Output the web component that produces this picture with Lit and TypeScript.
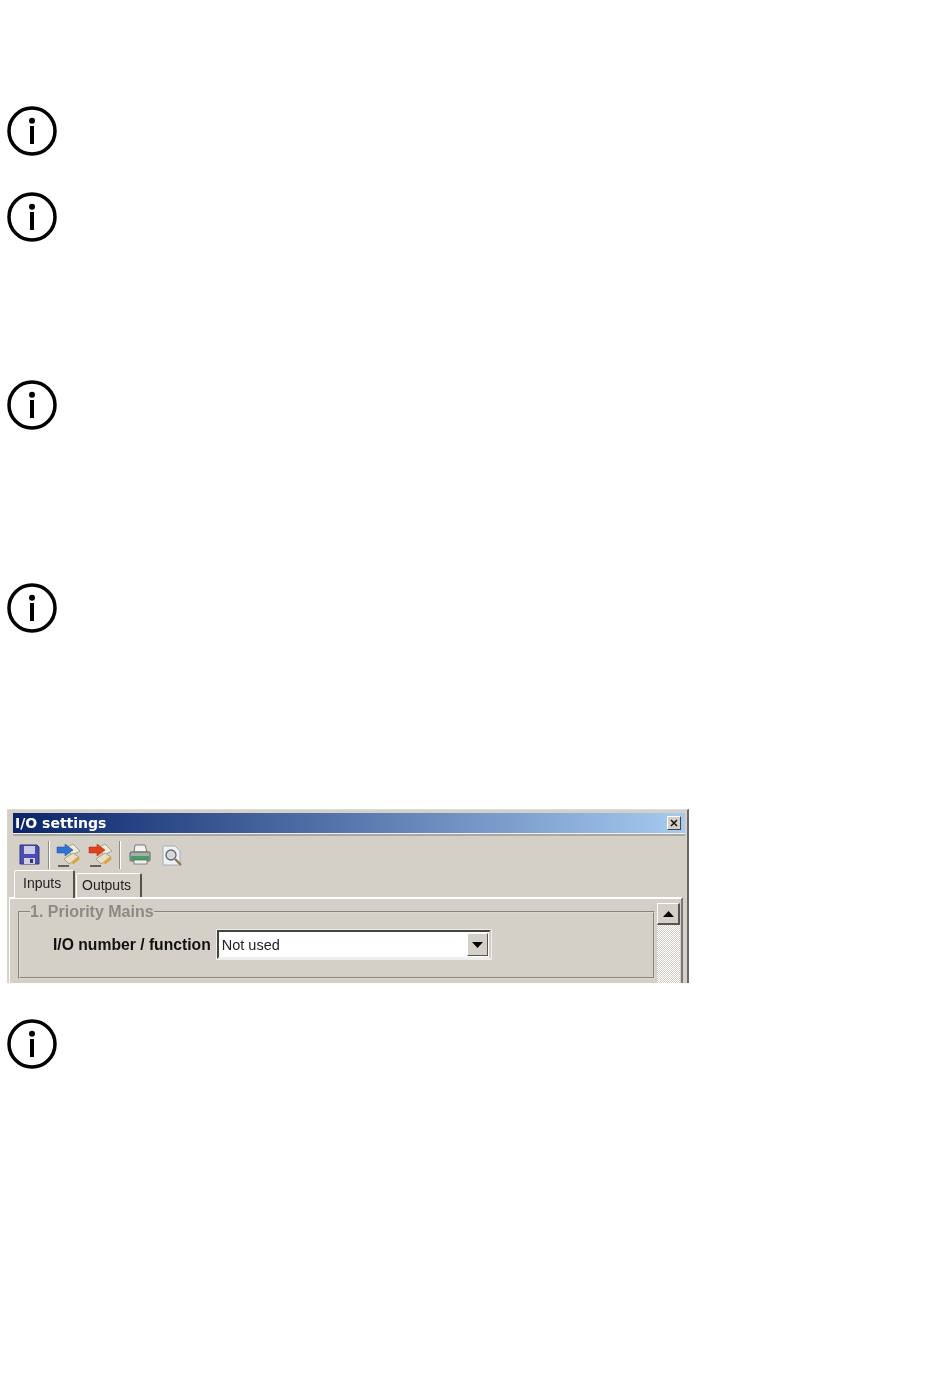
import { LitElement, html, css, svg } from 'lit'
import { customElement } from 'lit/decorators.js'

const infoIcon = html`<svg class="info" width="50" height="50" viewBox="0 0 50 50">
    <circle cx="25" cy="25" r="23" fill="none" stroke="#000" stroke-width="3.500" />
    <circle cx="25" cy="14.800" r="3" fill="#000" />
    <rect x="23" y="20" width="4" height="18" fill="#000" />
</svg>`

const saveIcon = svg`
    <path d="M1 1h17l2 2v17H1z" fill="#4a4cae" stroke="#34367f" />
    <rect x="5" y="2" width="11" height="8" fill="#c9cbe8" />
    <rect x="5" y="14" width="11" height="6" fill="#d0d0e0" />
    <rect x="11" y="15" width="3" height="4" fill="#34367f" />
`

const transferIcon = (arrow: string, dark: string) => svg`
    <path d="M9 5l8-4 7 7-8 4z" fill="#efe9d8" stroke="#9a9482" stroke-width=".8" />
    <path d="M8 16l9-6 6 4-10 7z" fill="#e8dfc2" stroke="#9a9482" stroke-width=".8" />
    <path d="M15 20l6-6 3 2-6 5z" fill="#d9a640" />
    <path d="M1 4h8V1l8 6-8 6v-3H1z" fill="${arrow}" stroke="${dark}" stroke-width=".5" />
    <path d="M2 23h11" stroke="#333" stroke-width="1.400" />
`

const printerIcon = svg`
    <path d="M6 1h10l2 7H5z" fill="#f4f4f4" stroke="#777" />
    <rect x="1" y="8" width="20" height="9" rx="1" fill="#a9adad" stroke="#5d6464" />
    <rect x="2" y="12" width="18" height="4" fill="#45a060" />
    <rect x="5" y="16" width="13" height="4" fill="#ecf0ec" stroke="#5d6464" stroke-width=".7" />
`

const previewIcon = svg`
    <path d="M2 2h12l5 5v14H2z" fill="#eef1f6" stroke="#a6acb8" />
    <circle cx="10" cy="11" r="5" fill="#d5d9de" stroke="#666" stroke-width="1.300" />
    <path d="M14 15l6 6" stroke="#8a7a50" stroke-width="2.400" />
`

@customElement('app-root')
export class AppRoot extends LitElement {
    static get styles() {
        return css`
            :host {
                display: flex;
                flex-direction: column;
                align-items: flex-start;
                min-height: 1387px;
                background: #fff;
                padding: 106px 0 0 7px;
                box-sizing: border-box;
                font-family: 'Liberation Sans', Arial, sans-serif;
            }

            .info {
                display: block;
                filter: blur(0.3px);
            }

            .gap-36 {
                margin-top: 36px;
            }

            .gap-138 {
                margin-top: 138px;
            }

            .gap-153 {
                margin-top: 153px;
            }

            .window {
                box-sizing: border-box;
                width: 682px;
                height: 174px;
                margin-top: 176px;
                padding: 3px 2px 0 5px;
                background: #d4d0c8;
                border-top: 1px solid #dcdcdc;
                border-left: 1px solid #d8d4cc;
                border-right: 2px solid #6a6760;
                overflow: hidden;
                display: flex;
                flex-direction: column;
                filter: blur(0.4px);
            }

            .title {
                flex: none;
                height: 20px;
                display: flex;
                align-items: center;
                justify-content: space-between;
                padding: 0 4px 0 2px;
                background: linear-gradient(90deg, #0a246a, #a6caf0);
                color: #fff;
                font: bold 14px/20px 'DejaVu Sans', sans-serif;
                border-bottom: 1px solid #f0efe8;
                box-shadow: 0 2px 0 #a9aa9f;
            }

            .close {
                box-sizing: border-box;
                width: 14px;
                height: 14px;
                display: flex;
                align-items: center;
                justify-content: center;
                background: #d4d0c8;
                border: 1px solid;
                border-color: #fff #444 #444 #fff;
            }

            .toolbar {
                flex: none;
                height: 35px;
                display: flex;
                align-items: center;
                padding-top: 6px;
                box-sizing: border-box;
            }

            .toolbar svg {
                display: block;
            }

            .save {
                margin-left: 6px;
            }

            .sep {
                width: 1px;
                height: 28px;
                background: #8e8b84;
                border-right: 1px solid #fff;
            }

            .sep.first {
                margin: 0 6px 0 8px;
            }

            .sep.second {
                margin: 0 8px 0 7px;
            }

            .arrow-out {
                margin-left: 8px;
            }

            .print-preview {
                margin-left: 10px;
            }

            .tabs {
                flex: none;
                display: flex;
                align-items: flex-end;
                height: 28px;
                margin-left: -5px;
                padding-left: 6px;
                position: relative;
                z-index: 1;
            }

            .tab {
                box-sizing: border-box;
                font-size: 14px;
                color: #222;
                background: #d4d0c8;
                border: 1px solid;
                border-color: #fff #55524c transparent #fff;
                border-width: 1px 2px 0 1px;
                border-radius: 2px 2px 0 0;
            }

            .tab.active {
                width: 61px;
                height: 28px;
                padding: 4px 0 0 8px;
                margin-bottom: -1px;
            }

            .tab.other {
                width: 66px;
                height: 24px;
                margin-left: 1px;
                padding: 3px 0 0 5px;
            }

            .page {
                flex: 1;
                min-height: 0;
                display: flex;
                gap: 2px;
                margin: 0 2px 0 -4px;
                padding: 4px 3px 0 8px;
                border-top: 2px solid #fff;
                border-left: 1px solid #fff;
                border-right: 2px solid #777;
            }

            fieldset {
                box-sizing: border-box;
                flex: none;
                width: 637px;
                height: 76px;
                margin: 0;
                padding: 0 0 0 33px;
                min-width: 0;
                border: 2px groove #dcd8d0;
            }

            legend {
                margin-left: -23px;
                padding: 0;
                font-size: 16px;
                line-height: 18px;
                font-weight: bold;
                color: #8c8a86;
            }

            .row {
                display: flex;
                align-items: center;
                gap: 6px;
                margin-top: 9px;
            }

            label {
                font-size: 15.700px;
                font-weight: bold;
                color: #111;
            }

            .select {
                box-sizing: border-box;
                width: 274px;
                height: 29px;
                display: flex;
                align-items: center;
                justify-content: space-between;
                padding: 0 1px 0 3px;
                background: #fff;
                border: 2px solid;
                border-color: #444 #d4d0c8 #eeeeee #444;
                outline: 1px solid #efefea;
                font-size: 14.500px;
                color: #222;
            }

            .drop {
                box-sizing: border-box;
                width: 21px;
                height: 23px;
                display: flex;
                align-items: center;
                justify-content: center;
                background: #d4d0c8;
                border: 1px solid;
                border-color: #fff #555 #555 #fff;
            }

            .scroll {
                flex: none;
                width: 23px;
                background: repeating-conic-gradient(#d4d0c8 0 25%, #fff 0 50%) 0 0 / 2px 2px;
            }

            .scroll-up {
                box-sizing: border-box;
                height: 22px;
                display: flex;
                align-items: center;
                justify-content: center;
                background: #d4d0c8;
                border: 1px solid;
                border-color: #fff #555 #555 #fff;
                border-width: 1px 2px 2px 1px;
            }

            .last {
                margin-top: 36px;
            }
        `
    }

    render() {
        return html`
            ${infoIcon}
            <div class="gap-36">${infoIcon}</div>
            <div class="gap-138">${infoIcon}</div>
            <div class="gap-153">${infoIcon}</div>

            <div class="window">
                <div class="title">
                    <span>I/O settings</span>
                    <span class="close">
                        <svg width="8" height="8" viewBox="0 0 8 8">
                            <path d="M1 1l6 6M7 1L1 7" stroke="#111" stroke-width="1.500" />
                        </svg>
                    </span>
                </div>

                <div class="toolbar">
                    <svg class="save" width="21" height="21" viewBox="0 0 21 21">${saveIcon}</svg>
                    <span class="sep first"></span>
                    <svg width="24" height="24" viewBox="0 0 24 24">${transferIcon('#2f74d0', '#1c4a94')}</svg>
                    <svg class="arrow-out" width="24" height="24" viewBox="0 0 24 24">${transferIcon('#e2401c', '#a02a10')}</svg>
                    <span class="sep second"></span>
                    <svg width="22" height="21" viewBox="0 0 22 21">${printerIcon}</svg>
                    <svg class="print-preview" width="22" height="22" viewBox="0 0 22 22">${previewIcon}</svg>
                </div>

                <div class="tabs">
                    <div class="tab active">Inputs</div>
                    <div class="tab other">Outputs</div>
                </div>

                <div class="page">
                    <fieldset>
                        <legend>1. Priority Mains</legend>
                        <div class="row">
                            <label>I/O number / function</label>
                            <div class="select">
                                <span>Not used</span>
                                <span class="drop">
                                    <svg width="11" height="6" viewBox="0 0 11 6"><path d="M0 0h11L5.500 6z" fill="#000" /></svg>
                                </span>
                            </div>
                        </div>
                    </fieldset>
                    <div class="scroll">
                        <div class="scroll-up">
                            <svg width="11" height="6" viewBox="0 0 11 6"><path d="M0 6h11L5.500 0z" fill="#000" /></svg>
                        </div>
                    </div>
                </div>
            </div>

            <div class="last">${infoIcon}</div>
        `
    }
}
